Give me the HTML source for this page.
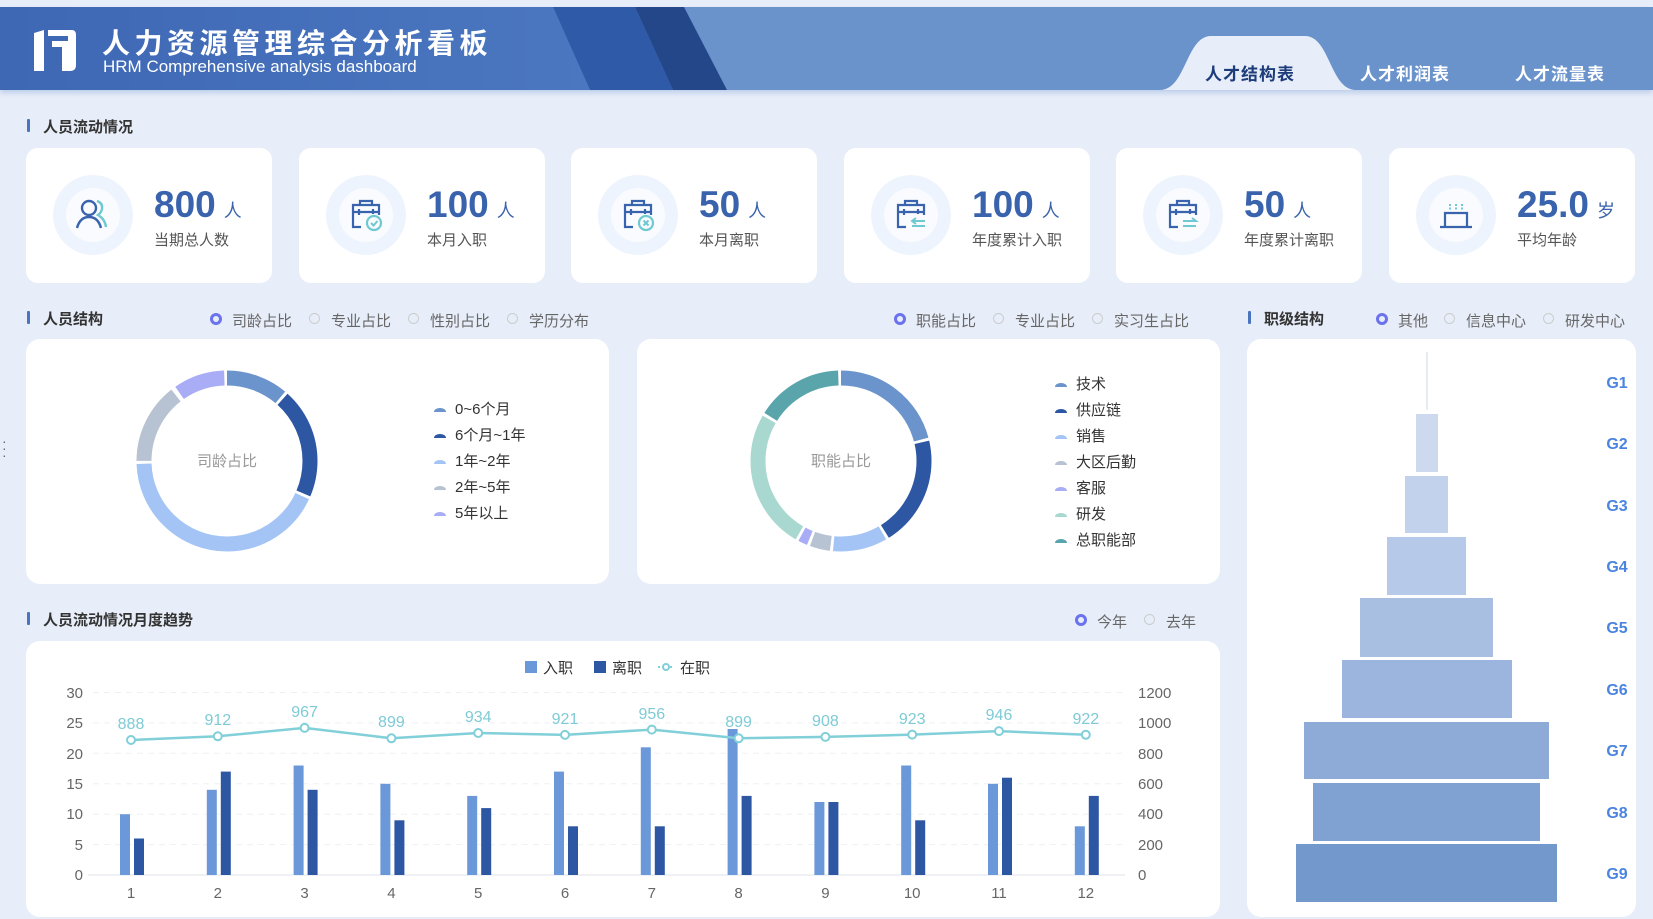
<!DOCTYPE html>
<html><head><meta charset="utf-8">
<style>
*{margin:0;padding:0;box-sizing:border-box}
body{width:1653px;height:919px;overflow:hidden;background:#e8eef9;font-family:"Liberation Sans","Noto Sans CJK SC",sans-serif;position:relative;color:#333}
.abs{position:absolute}
.card{position:absolute;top:148px;width:246px;height:135px;background:#fff;border-radius:12px}
.num{position:absolute;left:128px;top:36px;font-size:37px;font-weight:bold;color:#3a63ad;white-space:nowrap}
.num small{font-size:18px;font-weight:normal;margin-left:8px;color:#3a63ad}
.lab{position:absolute;left:128px;top:81px;font-size:15px;color:#555;white-space:nowrap}
.ic{position:absolute;left:27px;top:27px;width:80px;height:80px}
.sec{position:absolute;font-size:15px;font-weight:bold;color:#333;padding-left:16px;white-space:nowrap}
.sec:before{content:"";position:absolute;left:0;top:3px;width:3px;height:13px;background:#4a74bd;border-radius:1px}
.rad{position:absolute;font-size:15px;color:#666;white-space:nowrap;padding-left:22px}
.rad:before{content:"";position:absolute;left:0;top:3px;width:9px;height:9px;border:1.5px solid #ccc;border-radius:50%}
.rad.on:before{border:3.5px solid #6b72ee;width:6px;height:6px}
.panel{position:absolute;background:#fff;border-radius:14px}
</style></head><body>
<svg class="abs" style="left:0;top:0" width="1653" height="100">
<defs>
<linearGradient id="hg" x1="0" x2="1"><stop offset="0" stop-color="#3e67b4"/><stop offset="1" stop-color="#4b77c0"/></linearGradient>
<filter id="sh" x="-5%" y="-20%" width="110%" height="160%"><feDropShadow dx="0" dy="3" stdDeviation="3" flood-color="#6a8fcf" flood-opacity="0.35"/></filter>
</defs>
<rect x="0" y="7" width="1653" height="83" fill="#6a93cc" filter="url(#sh)"/>
<polygon points="0,7 553,7 590,90 0,90" fill="url(#hg)"/>
<polygon points="553,7 635,7 673,90 590,90" fill="#2f5aa8"/>
<polygon points="635,7 684,7 727,90 673,90" fill="#24478a"/>
<path d="M1160,90 C1186,90 1186,36 1211,36 L1305,36 C1330,36 1330,90 1356,90 Z" fill="#e8eef9"/>
<path d="M34,33 L44,30 L44,71 L34,71 Z M48,30 L72,30 Q76,30 76,35 L76,65 Q76,71 70,71 L62,71 L62,47 L52,47 L52,41 L68,41 L68,36 L48,36 Z" fill="#fff"/>
</svg>
<div class="abs" style="left:102px;top:22px;font-size:28px;font-weight:bold;color:#fff;letter-spacing:4.5px;white-space:nowrap">人力资源管理综合分析看板</div>
<div class="abs" style="left:103px;top:57px;font-size:17px;color:#fff;white-space:nowrap">HRM Comprehensive analysis dashboard</div>
<div class="abs" style="left:1205px;top:60px;font-size:17px;font-weight:bold;color:#1d3d7a;letter-spacing:1px">人才结构表</div>
<div class="abs" style="left:1360px;top:60px;font-size:17px;font-weight:bold;color:#fff;letter-spacing:1px">人才利润表</div>
<div class="abs" style="left:1515px;top:60px;font-size:17px;font-weight:bold;color:#fff;letter-spacing:1px">人才流量表</div>

<div class="sec" style="left:27px;top:116px">人员流动情况</div>

<div class="card" style="left:26px">
<svg class="ic" viewBox="0 0 80 80"><circle cx="40" cy="40" r="40" fill="#eef4fd"/><circle cx="40" cy="40" r="27" fill="#f9fbff"/>
<circle cx="36" cy="33" r="7" fill="none" stroke="#3a63ad" stroke-width="2.4"/><path d="M24,53 Q27,42 36,42 Q45,42 48,53" fill="none" stroke="#3a63ad" stroke-width="2.4"/>
<path d="M44,26 Q50,28 49,34 Q48,38 45,40 Q52,44 53,52" fill="none" stroke="#6fc9d0" stroke-width="2.4"/></svg>
<div class="num">800<small>人</small></div><div class="lab">当期总人数</div></div>

<div class="card" style="left:299px">
<svg class="ic" viewBox="0 0 80 80"><circle cx="40" cy="40" r="40" fill="#eef4fd"/><circle cx="40" cy="40" r="27" fill="#f9fbff"/>
<path d="M35,52 L27,52 L27,30 L53,30 L53,40 M34,30 L34,26 L46,26 L46,30 M27,37 L53,37 M33,34 L33,40 M47,34 L47,39" fill="none" stroke="#3a63ad" stroke-width="2.2"/>
<circle cx="48" cy="48" r="7" fill="none" stroke="#6fc9d0" stroke-width="2.2"/><path d="M45,48 L47.5,50.5 L51.5,46" fill="none" stroke="#6fc9d0" stroke-width="2"/></svg>
<div class="num">100<small>人</small></div><div class="lab">本月入职</div></div>

<div class="card" style="left:571px">
<svg class="ic" viewBox="0 0 80 80"><circle cx="40" cy="40" r="40" fill="#eef4fd"/><circle cx="40" cy="40" r="27" fill="#f9fbff"/>
<path d="M35,52 L27,52 L27,30 L53,30 L53,40 M34,30 L34,26 L46,26 L46,30 M27,37 L53,37 M33,34 L33,40 M47,34 L47,39" fill="none" stroke="#3a63ad" stroke-width="2.2"/>
<circle cx="48" cy="48" r="7" fill="none" stroke="#6fc9d0" stroke-width="2.2"/><path d="M45.5,45.5 L50.5,50.5 M50.5,45.5 L45.5,50.5" fill="none" stroke="#6fc9d0" stroke-width="2"/></svg>
<div class="num">50<small>人</small></div><div class="lab">本月离职</div></div>

<div class="card" style="left:844px">
<svg class="ic" viewBox="0 0 80 80"><circle cx="40" cy="40" r="40" fill="#eef4fd"/><circle cx="40" cy="40" r="27" fill="#f9fbff"/>
<path d="M35,52 L27,52 L27,30 L53,30 L53,40 M34,30 L34,26 L46,26 L46,30 M27,37 L53,37 M33,34 L33,40 M47,34 L47,39" fill="none" stroke="#3a63ad" stroke-width="2.2"/>
<path d="M41,46 L54,46 M45,43 L41,46 L45,49 M41,51 L54,51" fill="none" stroke="#6fc9d0" stroke-width="2"/></svg>
<div class="num">100<small>人</small></div><div class="lab">年度累计入职</div></div>

<div class="card" style="left:1116px">
<svg class="ic" viewBox="0 0 80 80"><circle cx="40" cy="40" r="40" fill="#eef4fd"/><circle cx="40" cy="40" r="27" fill="#f9fbff"/>
<path d="M35,52 L27,52 L27,30 L53,30 L53,40 M34,30 L34,26 L46,26 L46,30 M27,37 L53,37 M33,34 L33,40 M47,34 L47,39" fill="none" stroke="#3a63ad" stroke-width="2.2"/>
<path d="M40,46 L53,46 L49,43 M40,51 L53,51" fill="none" stroke="#6fc9d0" stroke-width="2"/></svg>
<div class="num">50<small>人</small></div><div class="lab">年度累计离职</div></div>

<div class="card" style="left:1389px">
<svg class="ic" viewBox="0 0 80 80"><circle cx="40" cy="40" r="40" fill="#eef4fd"/><circle cx="40" cy="40" r="27" fill="#f9fbff"/>
<path d="M29,51 L29,38 L51,38 L51,51 M24,52 L56,52" fill="none" stroke="#3a63ad" stroke-width="2.2"/>
<path d="M34,29 L34,35 M40,29 L40,35 M46,29 L46,35" fill="none" stroke="#6fc9d0" stroke-width="2" stroke-dasharray="2 1.5"/></svg>
<div class="num">25.0<small>岁</small></div><div class="lab">平均年龄</div></div>

<div class="sec" style="left:27px;top:308px">人员结构</div>
<div class="rad on" style="left:210px;top:310px">司龄占比</div>
<div class="rad" style="left:309px;top:310px">专业占比</div>
<div class="rad" style="left:408px;top:310px">性别占比</div>
<div class="rad" style="left:507px;top:310px">学历分布</div>
<div class="rad on" style="left:894px;top:310px">职能占比</div>
<div class="rad" style="left:993px;top:310px">专业占比</div>
<div class="rad" style="left:1092px;top:310px">实习生占比</div>
<div class="sec" style="left:1248px;top:308px">职级结构</div>
<div class="rad on" style="left:1376px;top:310px">其他</div>
<div class="rad" style="left:1444px;top:310px">信息中心</div>
<div class="rad" style="left:1543px;top:310px">研发中心</div>

<div class="panel" style="left:26px;top:339px;width:583px;height:245px"></div>
<div class="panel" style="left:637px;top:339px;width:583px;height:245px"></div>
<div class="panel" style="left:1247px;top:339px;width:389px;height:578px"></div>

<div class="sec" style="left:27px;top:609px">人员流动情况月度趋势</div>
<div class="rad on" style="left:1075px;top:611px">今年</div>
<div class="rad" style="left:1144px;top:611px">去年</div>
<div class="panel" style="left:26px;top:641px;width:1194px;height:276px"></div>

<div class="abs" style="left:2px;top:438px;color:#666;font-size:14px;line-height:7px">·<br>·<br>·</div>

<svg class="abs" style="left:0;top:0" width="1653" height="919" font-family="Liberation Sans, Noto Sans CJK SC, sans-serif">
<g transform="rotate(-90 227 461)" fill="none" stroke-width="15">
<circle cx="227" cy="461" r="83" stroke="#6b93cc" stroke-dasharray="57.9 600"/>
<circle cx="227" cy="461" r="83" stroke="#2d56a3" stroke-dasharray="102.9 600" stroke-dashoffset="-60.8"/>
<circle cx="227" cy="461" r="83" stroke="#a3c4f5" stroke-dasharray="221.6 600" stroke-dashoffset="-166.6"/>
<circle cx="227" cy="461" r="83" stroke="#b7c2d3" stroke-dasharray="75.3 600" stroke-dashoffset="-391.1"/>
<circle cx="227" cy="461" r="83" stroke="#a9adf5" stroke-dasharray="47.8 600" stroke-dashoffset="-470.8"/>
</g>
<text x="227" y="466" font-size="15" fill="#999" text-anchor="middle">司龄占比</text>
<g font-size="15" fill="#333">
<path fill="#6b93cc" d="M434,412 a6,4 0 0 1 12,0 z"/><text x="455" y="414">0~6个月</text>
<path fill="#2d56a3" d="M434,438 a6,4 0 0 1 12,0 z"/><text x="455" y="440">6个月~1年</text>
<path fill="#a3c4f5" d="M434,464 a6,4 0 0 1 12,0 z"/><text x="455" y="466">1年~2年</text>
<path fill="#b7c2d3" d="M434,490 a6,4 0 0 1 12,0 z"/><text x="455" y="492">2年~5年</text>
<path fill="#a9adf5" d="M434,516 a6,4 0 0 1 12,0 z"/><text x="455" y="518">5年以上</text>
</g>
<g transform="rotate(-90 841 461)" fill="none" stroke-width="15">
<circle cx="841" cy="461" r="83" stroke="#6b93cc" stroke-dasharray="108.6 600"/>
<circle cx="841" cy="461" r="83" stroke="#2d56a3" stroke-dasharray="102.9 600" stroke-dashoffset="-111.5"/>
<circle cx="841" cy="461" r="83" stroke="#a3c4f5" stroke-dasharray="50.7 600" stroke-dashoffset="-217.3"/>
<circle cx="841" cy="461" r="83" stroke="#b7c2d3" stroke-dasharray="18.8 600" stroke-dashoffset="-270.9"/>
<circle cx="841" cy="461" r="83" stroke="#a9adf5" stroke-dasharray="8.7 600" stroke-dashoffset="-292.6"/>
<circle cx="841" cy="461" r="83" stroke="#a8d8d0" stroke-dasharray="130.4 600" stroke-dashoffset="-304.2"/>
<circle cx="841" cy="461" r="83" stroke="#5aa5ab" stroke-dasharray="81.1 600" stroke-dashoffset="-437.5"/>
</g>
<text x="841" y="466" font-size="15" fill="#999" text-anchor="middle">职能占比</text>
<g font-size="15" fill="#333">
<path fill="#6b93cc" d="M1055,387 a6,4 0 0 1 12,0 z"/><text x="1076" y="389">技术</text>
<path fill="#2d56a3" d="M1055,413 a6,4 0 0 1 12,0 z"/><text x="1076" y="415">供应链</text>
<path fill="#a3c4f5" d="M1055,439 a6,4 0 0 1 12,0 z"/><text x="1076" y="441">销售</text>
<path fill="#b7c2d3" d="M1055,465 a6,4 0 0 1 12,0 z"/><text x="1076" y="467">大区后勤</text>
<path fill="#a9adf5" d="M1055,491 a6,4 0 0 1 12,0 z"/><text x="1076" y="493">客服</text>
<path fill="#a8d8d0" d="M1055,517 a6,4 0 0 1 12,0 z"/><text x="1076" y="519">研发</text>
<path fill="#5aa5ab" d="M1055,543 a6,4 0 0 1 12,0 z"/><text x="1076" y="545">总职能部</text>
</g>
<line x1="1427" y1="352" x2="1427" y2="410" stroke="#dde4f0" stroke-width="1.5"/>
<rect x="1416" y="414" width="22" height="58" fill="#ccd9ef"/>
<rect x="1405" y="476" width="43" height="57" fill="#c3d2ec"/>
<rect x="1387" y="537" width="79" height="58" fill="#b7c9e8"/>
<rect x="1360" y="598" width="133" height="59" fill="#a9bfe2"/>
<rect x="1342" y="660" width="170" height="58" fill="#9bb5de"/>
<rect x="1304" y="722" width="245" height="57" fill="#8eabd7"/>
<rect x="1313" y="783" width="227" height="58" fill="#80a2d2"/>
<rect x="1296" y="844" width="261" height="58" fill="#7398cc"/>
<g font-size="16" font-weight="bold" fill="#4a84e0" text-anchor="middle">
<text x="1617" y="388">G1</text><text x="1617" y="449">G2</text><text x="1617" y="511">G3</text><text x="1617" y="572">G4</text><text x="1617" y="633">G5</text><text x="1617" y="695">G6</text><text x="1617" y="756">G7</text><text x="1617" y="818">G8</text><text x="1617" y="879">G9</text>
</g>
<rect x="525" y="661" width="12" height="12" fill="#6b98d8"/><text x="543" y="673" font-size="15" fill="#333">入职</text>
<rect x="594" y="661" width="12" height="12" fill="#2d56a3"/><text x="612" y="673" font-size="15" fill="#333">离职</text>
<line x1="658" y1="667" x2="674" y2="667" stroke="#80cfd9" stroke-width="2" stroke-dasharray="2 2"/><circle cx="666" cy="667" r="3" fill="#fff" stroke="#80cfd9" stroke-width="2"/><text x="680" y="673" font-size="15" fill="#333">在职</text>
<g stroke="#eef0f4" stroke-dasharray="6 5">
<line x1="93" y1="692.5" x2="1125" y2="692.5"/><line x1="93" y1="722.9" x2="1125" y2="722.9"/><line x1="93" y1="753.3" x2="1125" y2="753.3"/><line x1="93" y1="783.7" x2="1125" y2="783.7"/><line x1="93" y1="814.2" x2="1125" y2="814.2"/><line x1="93" y1="844.6" x2="1125" y2="844.6"/>
</g>
<line x1="88" y1="875" x2="1125" y2="875" stroke="#dfe3ea"/>
<g font-size="15" fill="#666" text-anchor="end">
<text x="83" y="698">30</text><text x="83" y="728">25</text><text x="83" y="759">20</text><text x="83" y="789">15</text><text x="83" y="819">10</text><text x="83" y="850">5</text><text x="83" y="880">0</text>
</g>
<g font-size="15" fill="#666">
<text x="1138" y="698">1200</text><text x="1138" y="728">1000</text><text x="1138" y="759">800</text><text x="1138" y="789">600</text><text x="1138" y="819">400</text><text x="1138" y="850">200</text><text x="1138" y="880">0</text>
</g>
<g font-size="15" fill="#666" text-anchor="middle">
<text x="131" y="898">1</text><text x="217.8" y="898">2</text><text x="304.6" y="898">3</text><text x="391.4" y="898">4</text><text x="478.2" y="898">5</text><text x="565" y="898">6</text><text x="651.8" y="898">7</text><text x="738.6" y="898">8</text><text x="825.4" y="898">9</text><text x="912.2" y="898">10</text><text x="999" y="898">11</text><text x="1085.8" y="898">12</text>
</g>
<g fill="#6b98d8">
<rect x="120" y="814.2" width="10" height="60.8"/><rect x="206.8" y="789.8" width="10" height="85.2"/><rect x="293.6" y="765.5" width="10" height="109.5"/><rect x="380.4" y="783.8" width="10" height="91.2"/><rect x="467.2" y="795.9" width="10" height="79.1"/><rect x="554" y="771.6" width="10" height="103.4"/><rect x="640.8" y="747.3" width="10" height="127.7"/><rect x="727.6" y="729" width="10" height="146"/><rect x="814.4" y="802" width="10" height="73"/><rect x="901.2" y="765.5" width="10" height="109.5"/><rect x="988" y="783.8" width="10" height="91.2"/><rect x="1074.8" y="826.3" width="10" height="48.7"/>
</g>
<g fill="#2d56a3">
<rect x="134" y="838.5" width="10" height="36.5"/><rect x="220.8" y="771.6" width="10" height="103.4"/><rect x="307.6" y="789.8" width="10" height="85.2"/><rect x="394.4" y="820.3" width="10" height="54.7"/><rect x="481.2" y="808.1" width="10" height="66.9"/><rect x="568" y="826.3" width="10" height="48.7"/><rect x="654.8" y="826.3" width="10" height="48.7"/><rect x="741.6" y="795.9" width="10" height="79.1"/><rect x="828.4" y="802" width="10" height="73"/><rect x="915.2" y="820.3" width="10" height="54.7"/><rect x="1002" y="777.7" width="10" height="97.3"/><rect x="1088.8" y="795.9" width="10" height="79.1"/>
</g>
<polyline fill="none" stroke="#80cfd9" stroke-width="2.5" points="131,740 217.8,736.3 304.6,727.9 391.4,738.3 478.2,733 565,734.9 651.8,729.6 738.6,738.3 825.4,736.9 912.2,734.6 999,731.1 1085.8,734.8"/>
<g fill="#fff" stroke="#80cfd9" stroke-width="2">
<circle cx="131" cy="740" r="4"/><circle cx="217.8" cy="736.3" r="4"/><circle cx="304.6" cy="727.9" r="4"/><circle cx="391.4" cy="738.3" r="4"/><circle cx="478.2" cy="733" r="4"/><circle cx="565" cy="734.9" r="4"/><circle cx="651.8" cy="729.6" r="4"/><circle cx="738.6" cy="738.3" r="4"/><circle cx="825.4" cy="736.9" r="4"/><circle cx="912.2" cy="734.6" r="4"/><circle cx="999" cy="731.1" r="4"/><circle cx="1085.8" cy="734.8" r="4"/>
</g>
<g font-size="16" fill="#7ecbd6" text-anchor="middle">
<text x="131" y="729">888</text><text x="217.8" y="725">912</text><text x="304.6" y="717">967</text><text x="391.4" y="727">899</text><text x="478.2" y="722">934</text><text x="565" y="724">921</text><text x="651.8" y="719">956</text><text x="738.6" y="727">899</text><text x="825.4" y="726">908</text><text x="912.2" y="724">923</text><text x="999" y="720">946</text><text x="1085.8" y="724">922</text>
</g>
</svg>
</body></html>
